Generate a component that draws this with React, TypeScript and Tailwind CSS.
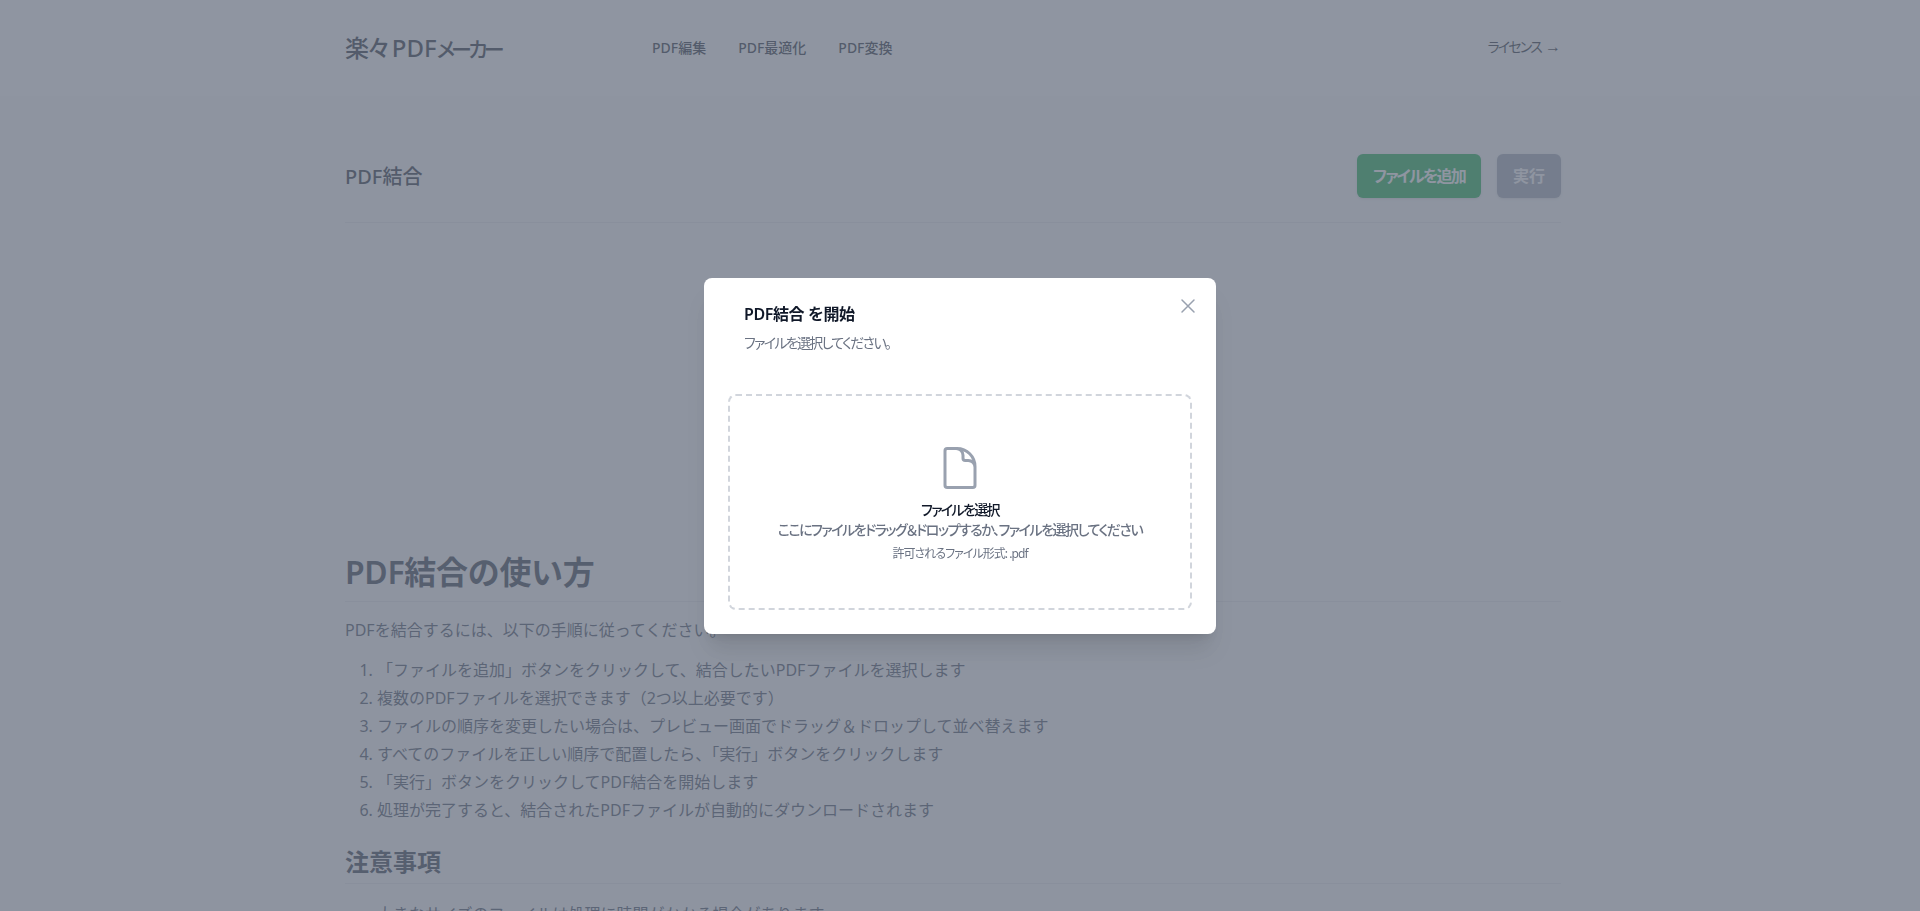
import React from 'react';

const navLinks = ['PDF編集', 'PDF最適化', 'PDF変換'];

const steps = [
  '「ファイルを追加」ボタンをクリックして、結合したいPDFファイルを選択します',
  '複数のPDFファイルを選択できます（2つ以上必要です）',
  'ファイルの順序を変更したい場合は、プレビュー画面でドラッグ＆ドロップして並べ替えます',
  'すべてのファイルを正しい順序で配置したら、「実行」ボタンをクリックします',
  '「実行」ボタンをクリックしてPDF結合を開始します',
  '処理が完了すると、結合されたPDFファイルが自動的にダウンロードされます',
];

const notes = [
  '大きなサイズのファイルは処理に時間がかかる場合があります',
  'パスワードで保護されたPDFファイルは結合できません',
];

const palt = "[font-feature-settings:'palt']";

const UploadModal = () => (
  <div className="fixed inset-0 flex items-center justify-center bg-gray-500/75">
    <div className="relative w-[512px] rounded-lg bg-white p-6 shadow-xl">
      <button className="absolute right-4 top-4 text-gray-400">
        <svg className="h-6 w-6" fill="none" viewBox="0 0 24 24" strokeWidth={1.5} stroke="currentColor">
          <path strokeLinecap="round" strokeLinejoin="round" d="M6 18L18 6M6 6l12 12" />
        </svg>
      </button>

      {/* Header */}
      <div className="ml-4">
        <h3 className="text-base font-semibold leading-6 tracking-[-0.025em] text-gray-900">PDF結合 を開始</h3>
        <p className={`mt-[7px] text-sm leading-5 tracking-[-0.12em] text-gray-500 ${palt}`}>ファイルを選択してください。</p>
      </div>

      {/* Drop zone */}
      <div className="mt-[41px] flex h-[216px] flex-col items-center justify-center rounded-lg border-2 border-dashed border-gray-300 pt-[5px]">
        <svg className="h-12 w-12 text-gray-400" fill="none" viewBox="0 0 24 24" strokeWidth={1.5} stroke="currentColor">
          <path
            strokeLinecap="round"
            strokeLinejoin="round"
            d="M19.5 14.25v-2.625a3.375 3.375 0 00-3.375-3.375h-1.5A1.125 1.125 0 0113.5 7.125v-1.5a3.375 3.375 0 00-3.375-3.375H8.25m2.25 0H5.625c-.621 0-1.125.504-1.125 1.125v17.25c0 .621.504 1.125 1.125 1.125h12.75c.621 0 1.125-.504 1.125-1.125V11.25a9 9 0 00-9-9z"
          />
        </svg>
        <p className={`mt-2 text-sm font-medium leading-5 tracking-[-0.12em] text-gray-900 ${palt}`}>ファイルを選択</p>
        <p className={`text-sm font-medium leading-5 tracking-[-0.105em] text-gray-500 ${palt}`}>
          ここにファイルをドラッグ＆ドロップするか、ファイルを選択してください
        </p>
        <p className={`mt-1 text-xs leading-5 tracking-[-0.08em] text-gray-500 ${palt}`}>許可されるファイル形式: .pdf</p>
      </div>
    </div>
  </div>
);

export default function App() {
  return (
    <div className="relative h-screen overflow-hidden bg-gray-50 pr-[14px] font-['Noto_Sans','Noto_Sans_CJK_JP',sans-serif]">
      <div className="-mr-[14px] bg-white pr-[14px]">
        <header className="mx-auto flex h-24 max-w-7xl items-center px-8">
          <a className={`flex w-[307px] items-baseline text-2xl font-medium text-gray-900 ${palt}`}>
            <span className="tracking-[-0.08em]">楽々</span>
            <span className="ml-1">PDF</span>
            <span className="text-[21px] tracking-[-0.18em]">メーカー</span>
          </a>
          <nav className="flex flex-1 gap-x-8">
            {navLinks.map((link) => (
              <a key={link} className="text-sm font-medium text-gray-900">
                {link}
              </a>
            ))}
          </nav>
          <a className="mb-0.5 flex items-center gap-1 text-sm text-gray-900">
            <span className={`tracking-[-0.13em] ${palt}`}>ライセンス</span>
            <span className="font-['Liberation_Sans',sans-serif] text-base leading-none">→</span>
          </a>
        </header>
      </div>

      <main className="mx-auto max-w-7xl px-8 pt-[58px]">
        {/* Title row */}
        <div className="flex items-center justify-between border-b border-gray-200 pb-6">
          <h1 className="pt-0.5 text-xl font-medium text-gray-900">PDF結合</h1>
          <div className="flex gap-4">
            <button className={`h-11 rounded-md bg-green-600 px-4 text-base font-semibold tracking-[-0.11em] text-white shadow-sm ${palt}`}>
              ファイルを追加
            </button>
            <button className="h-11 rounded-md bg-gray-400 px-4 text-base font-semibold text-white shadow-sm">
              実行
            </button>
          </div>
        </div>

        {/* Guide */}
        <section className="mt-[331px] text-gray-700">
          <h2 className="border-b border-gray-200 pb-[11px] text-[32px] font-semibold leading-9 tracking-[-0.01em] text-gray-800">PDF結合の使い方</h2>
          <p className="mt-4 text-base leading-6">PDFを結合するには、以下の手順に従ってください。</p>
          <ol className="mt-3.5 list-decimal pl-8 text-base leading-7">
            {steps.map((step) => (
              <li key={step}>{step}</li>
            ))}
          </ol>
          <h3 className="mt-[22px] border-b border-gray-200 pb-[5px] text-2xl font-bold leading-8 text-gray-800">注意事項</h3>
          <ul className="mt-4 list-disc pl-8 text-base leading-7">
            {notes.map((note) => (
              <li key={note}>{note}</li>
            ))}
          </ul>
        </section>
      </main>

      <UploadModal />
    </div>
  );
}
